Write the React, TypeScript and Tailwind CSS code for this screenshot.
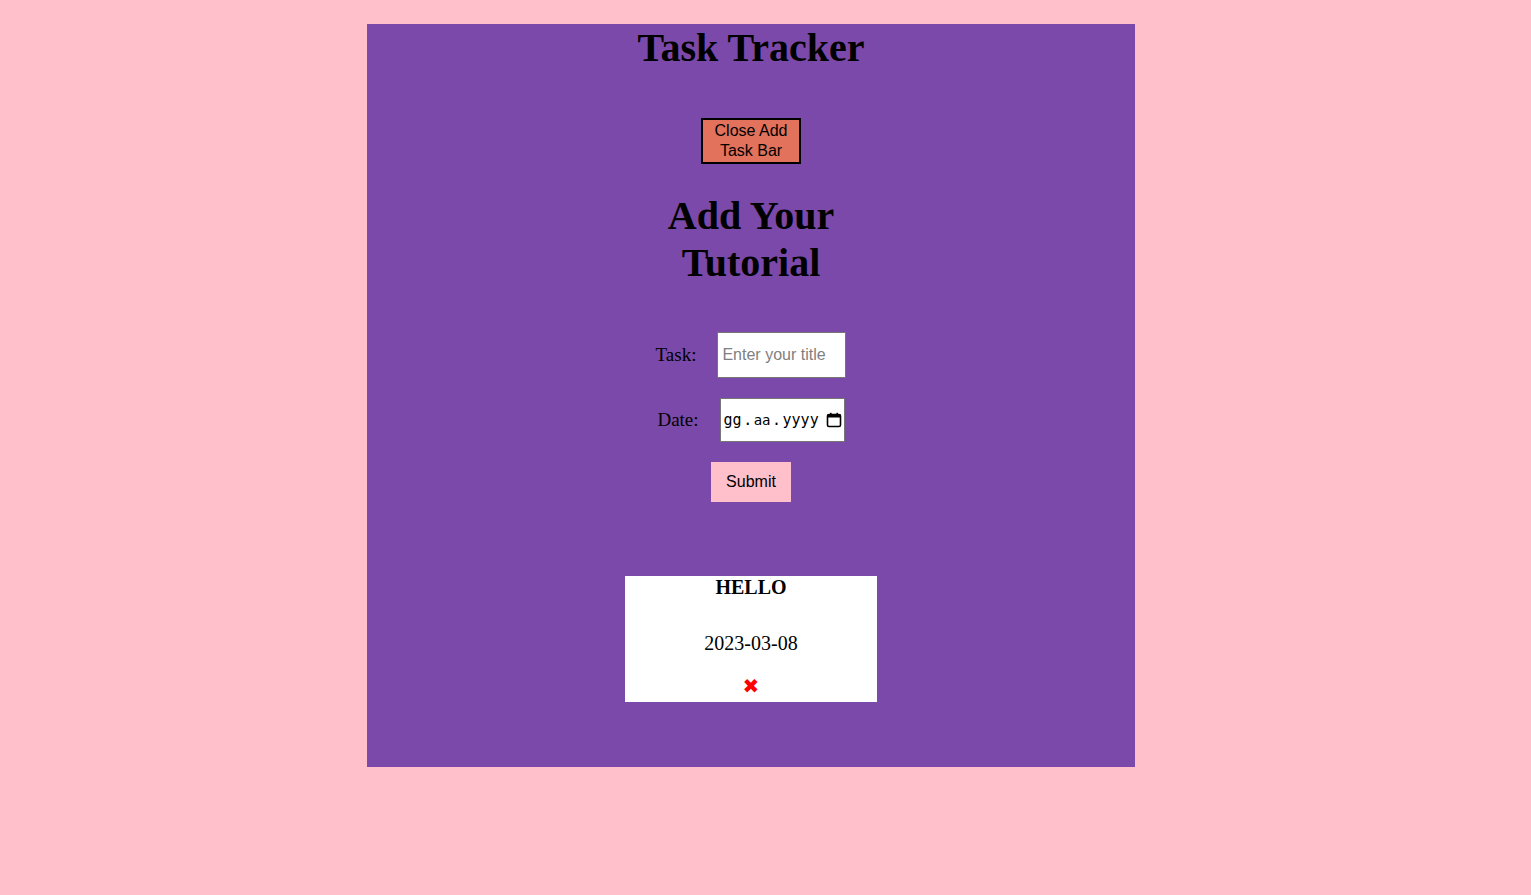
export default function App() {
  return (
    <div className="min-h-[895px] bg-[#FFC0CB] pt-6">
      <div className="ml-[367px] w-[768px] h-[743px] bg-[#7B49AA] flex flex-col items-center text-black" style={{ fontFamily: "'Liberation Serif', serif" }}>
        <h1 className="text-[40px] font-bold leading-[48px]">Task Tracker</h1>

        <button className="mt-[46px] w-[100px] h-[46px] bg-[#E2725B] border-2 border-black text-[16px] leading-[20px] text-black" style={{ fontFamily: "'Liberation Sans', sans-serif", fontWeight: 300 }}>
          Close Add Task Bar
        </button>

        <h2 className="mt-[28px] w-[200px] text-center text-[40px] font-bold leading-[47px]">Add Your Tutorial</h2>

        <div className="mt-[46px] flex items-center">
          <label className="text-[19px] mr-[21px]">Task:</label>
          <input
            placeholder="Enter your title"
            className="w-[129px] h-[46px] bg-white border border-[#767676] px-[4px] text-[16px] placeholder:text-[#808080] outline-none"
            style={{ fontFamily: "'Liberation Sans', sans-serif" }}
          />
        </div>

        <div className="mt-[20px] flex items-center">
          <label className="text-[19px] mr-[21px]">Date:</label>
          <div className="w-[125px] h-[44px] bg-white border border-[#767676] flex items-center pl-[3px] pr-[2px] text-[15px]" style={{ fontFamily: "'DejaVu Sans Mono', monospace" }}>
            <span>gg</span>
            <span className="mx-[1.5px]">.</span>
            <span className="text-[14px]">aa</span>
            <span className="mx-[1.5px]">.</span>
            <span>yyyy</span>
            <svg viewBox="0 0 16 16" className="ml-auto w-[16px] h-[16px]">
              <rect x="1.5" y="2.5" width="13" height="12" rx="1.5" fill="none" stroke="black" strokeWidth="1.6" />
              <rect x="1.5" y="2.5" width="13" height="3" fill="black" />
              <rect x="4" y="0.8" width="1.6" height="3" fill="black" />
              <rect x="10.4" y="0.8" width="1.6" height="3" fill="black" />
            </svg>
          </div>
        </div>

        <button className="mt-[20px] w-[80px] h-[40px] bg-[#FFC0CB] text-[16px] text-black" style={{ fontFamily: "'Liberation Sans', sans-serif", fontWeight: 300 }}>
          Submit
        </button>

        <div className="mt-[74px] w-[252px] h-[126px] bg-white flex flex-col items-center">
          <h3 className="mt-0 text-[20px] font-bold leading-[22px]">HELLO</h3>
          <p className="mt-[34px] text-[20px] leading-[22px]">2023-03-08</p>
          <span className="mt-[23px] text-[#f00] text-[20px] font-bold leading-[18px]" style={{ fontFamily: "'DejaVu Sans', sans-serif" }}>✖</span>
        </div>
      </div>
    </div>
  );
}
